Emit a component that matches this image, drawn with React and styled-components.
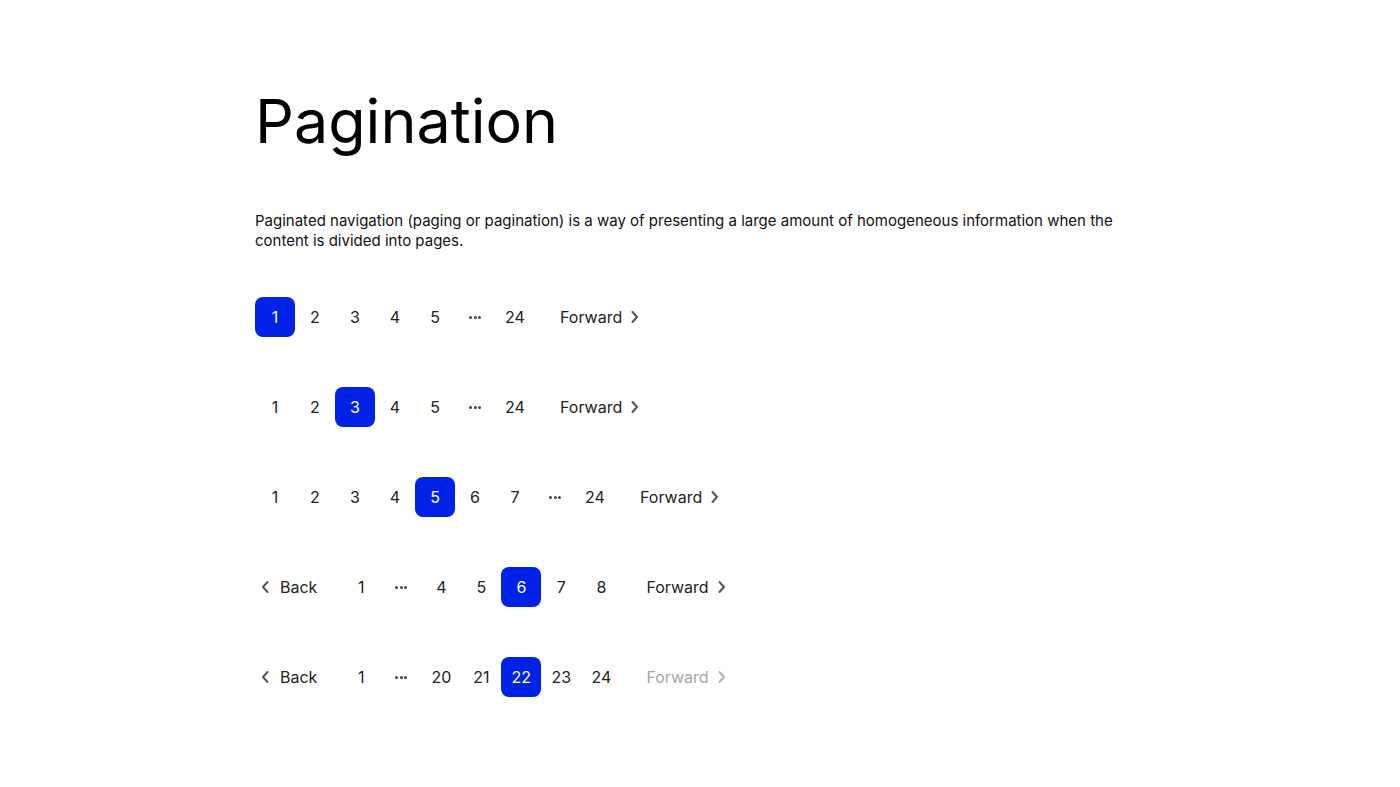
import React from "react";
import styled, { createGlobalStyle } from "styled-components";

const GlobalStyle = createGlobalStyle`
  html, body {
    margin: 0;
    padding: 0;
    background: #ffffff;
  }
  body {
    font-family: Inter, "Noto Sans", sans-serif;
    color: #000;
  }
`;

const Page = styled.main`
  width: 890px;
  margin: 0 auto;
  padding-top: 85px;
`;

const Title = styled.h1`
  margin: 0;
  font-size: 61px;
  font-weight: 400;
  line-height: 72px;
  letter-spacing: 0;
`;

const Lead = styled.p`
  margin: 54px 0 0;
  font-size: 15px;
  line-height: 20px;
  color: #111;
`;

const List = styled.div`
  margin-top: 46px;
  display: flex;
  flex-direction: column;
  gap: 50px;
`;

const Nav = styled.nav`
  display: flex;
  align-items: center;
  height: 40px;
`;

const Cell = styled.button`
  width: 40px;
  height: 40px;
  border: none;
  padding: 0;
  border-radius: 8px;
  font-family: inherit;
  font-size: 16px;
  display: flex;
  align-items: center;
  justify-content: center;
  cursor: pointer;
  background: ${(p) => (p.$active ? "#0022e6" : "transparent")};
  color: ${(p) => (p.$active ? "#fff" : "#222")};
`;

const Dots = styled.span`
  width: 40px;
  height: 40px;
  display: flex;
  align-items: center;
  justify-content: center;
  gap: 1.5px;

  i {
    width: 3px;
    height: 3px;
    border-radius: 50%;
    background: #444;
  }
`;

const Step = styled.button`
  height: 40px;
  border: none;
  background: transparent;
  font-family: inherit;
  font-size: 16px;
  display: flex;
  align-items: center;
  gap: ${(p) => (p.$back ? "10px" : "8px")};
  padding: ${(p) => (p.$back ? "0 12px 0 5px" : "0 12px")};
  margin: ${(p) => (p.$back ? "0 12px 0 0" : "0 0 0 13px")};
  cursor: ${(p) => (p.disabled ? "default" : "pointer")};
  color: ${(p) => (p.disabled ? "#a6a6a6" : "#222")};

  svg {
    color: ${(p) => (p.disabled ? "#b3b3b3" : "#555")};
  }
`;

const Chevron = ({ left }) => (
  <svg width="10" height="14" viewBox="0 0 10 14" fill="none">
    <path
      d={left ? "M7.5 2 L3 7 L7.5 12" : "M2.5 2 L7 7 L2.5 12"}
      stroke="currentColor"
      strokeWidth="2"
      strokeLinecap="round"
      strokeLinejoin="round"
    />
  </svg>
);

const rows = [
  { back: false, items: [1, 2, 3, 4, 5, "…", 24], active: 1, forward: true },
  { back: false, items: [1, 2, 3, 4, 5, "…", 24], active: 3, forward: true },
  { back: false, items: [1, 2, 3, 4, 5, 6, 7, "…", 24], active: 5, forward: true },
  { back: true, items: [1, "…", 4, 5, 6, 7, 8], active: 6, forward: true },
  { back: true, items: [1, "…", 20, 21, 22, 23, 24], active: 22, forward: false },
];

function Pager({ row }) {
  return (
    <Nav>
      {row.back && (
        <Step $back>
          <Chevron left />
          Back
        </Step>
      )}
      {row.items.map((it, i) =>
        it === "…" ? (
          <Dots key={i}>
            <i />
            <i />
            <i />
          </Dots>
        ) : (
          <Cell key={i} $active={it === row.active}>
            {it}
          </Cell>
        )
      )}
      <Step disabled={!row.forward}>
        Forward
        <Chevron />
      </Step>
    </Nav>
  );
}

export default function App() {
  return (
    <>
      <GlobalStyle />
      <Page>
        <Title>Pagination</Title>
        <Lead>
          Paginated navigation (paging or pagination) is a way of presenting a
          large amount of homogeneous information when the content is divided
          into pages.
        </Lead>
        <List>
          {rows.map((r, i) => (
            <Pager key={i} row={r} />
          ))}
        </List>
      </Page>
    </>
  );
}
